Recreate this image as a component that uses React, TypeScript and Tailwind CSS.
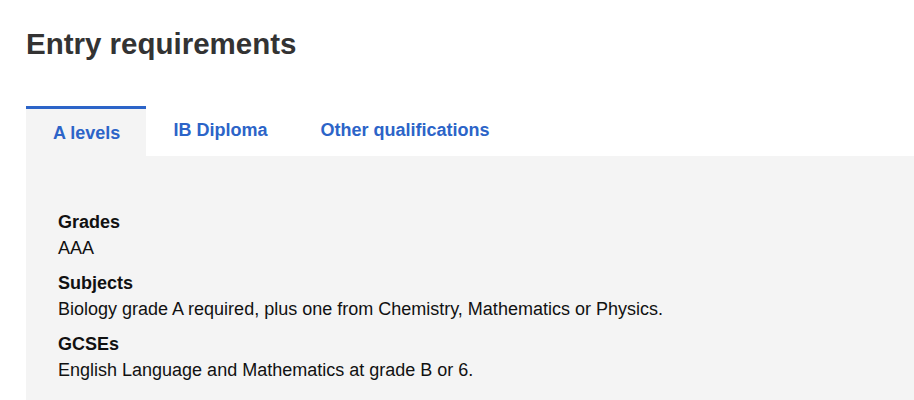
import { useState } from "react";

const tabs = ["A levels", "IB Diploma", "Other qualifications"];

const requirements = [
  { label: "Grades", value: "AAA" },
  {
    label: "Subjects",
    value: "Biology grade A required, plus one from Chemistry, Mathematics or Physics.",
  },
  { label: "GCSEs", value: "English Language and Mathematics at grade B or 6." },
];

export default function App() {
  const [active, setActive] = useState(0);

  return (
    <div className="bg-white pl-[26px] font-['Liberation_Sans',Arial,sans-serif]">
      <h1 className="pt-[26px] text-[29.5px] font-bold leading-9 text-[#333]">Entry requirements</h1>

      <div className="mt-[44px] flex">
        {tabs.map((tab, i) => (
          <button
            key={tab}
            onClick={() => setActive(i)}
            className={
              i === active
                ? "flex h-[50px] items-start border-t-[3px] border-[#2c64c8] bg-[#f4f4f4] pl-[27px] pr-[26px] pt-[14px] text-lg font-bold leading-5 text-[#2c64c8]"
                : "flex h-[50px] items-start pl-[27px] pr-[26px] pt-[14px] text-lg font-bold leading-5 text-[#2c64c8] cursor-pointer"
            }
          >
            {tab}
          </button>
        ))}
      </div>

      <dl className="bg-[#f4f4f4] pb-[7px] pl-8 pt-[54px] text-lg text-[#111]">
        {requirements.map((r) => (
          <div key={r.label} className="mb-[11px]">
            <dt className="font-bold leading-6">{r.label}</dt>
            <dd className="mt-0.5 leading-6">{r.value}</dd>
          </div>
        ))}
      </dl>
    </div>
  );
}
